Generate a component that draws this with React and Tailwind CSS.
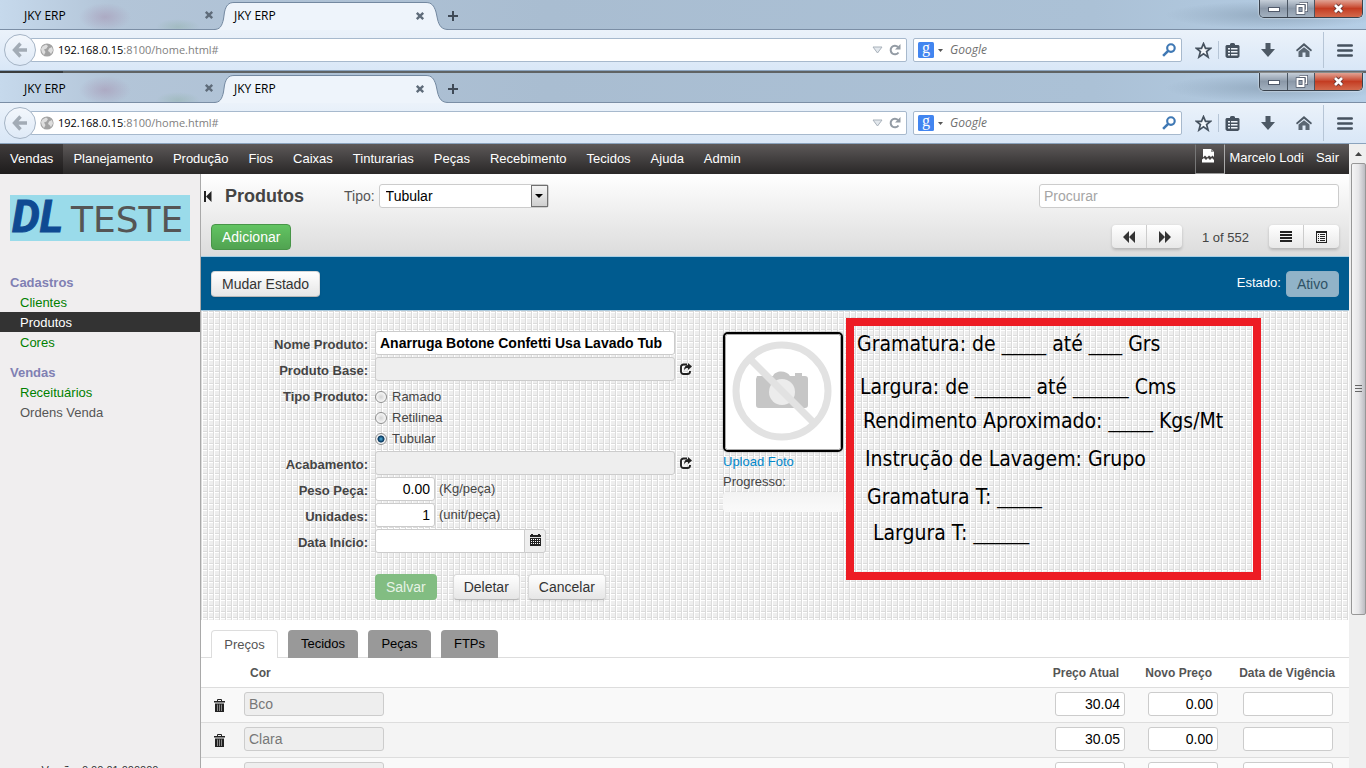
import React from "react";

const CHROME_FONT = "font-['Open_Sans','Noto_Sans',sans-serif]";

function TabClose() {
  return (
    <button type="button" aria-label="Fechar aba" className="flex">
      <svg width="10" height="10" viewBox="0 0 10 10" fill="none" stroke="#5f6c7a" strokeWidth="2.4">
        <path d="M1.8 1.8 8.2 8.2M8.2 1.8 1.8 8.2" />
      </svg>
    </button>
  );
}

function WindowControls() {
  return (
    <div className="flex h-[18px] overflow-hidden rounded-b-[5px] border border-t-0 border-[#39424d] shadow-[0_0_2px_#ffffff]">
      <button type="button" aria-label="Minimizar" className="flex w-7 items-center justify-center border-r border-[#4a5562] bg-linear-to-b from-[#c6cfd9] via-[#8b98a8] via-50% to-[#a3b1c0]">
        <svg width="12" height="6" viewBox="0 0 12 6"><rect x="0.5" y="1.5" width="11" height="4" fill="#fff" stroke="#50596a" /></svg>
      </button>
      <button type="button" aria-label="Restaurar" className="flex w-[27px] items-center justify-center border-r border-[#4a5562] bg-linear-to-b from-[#c6cfd9] via-[#8b98a8] via-50% to-[#a3b1c0]">
        <svg width="13" height="13" viewBox="0 0 13 13" fill="none">
          <path d="M4.5 1.5h7v7h-3" stroke="#50596a" strokeWidth="3" />
          <path d="M4.5 1.5h7v7h-3" stroke="#fff" strokeWidth="1.5" />
          <rect x="2.5" y="4" width="6" height="7" stroke="#50596a" strokeWidth="3.5" />
          <rect x="2.5" y="4" width="6" height="7" stroke="#fff" strokeWidth="2" />
        </svg>
      </button>
      <button type="button" aria-label="Fechar" className="flex w-[47px] items-center justify-center bg-linear-to-b from-[#e0a294] via-[#c43c22] via-50% to-[#d3694c]">
        <svg width="13" height="11" viewBox="0 0 13 11" fill="none">
          <path d="M3 2 10 9M10 2 3 9" stroke="#5a2c2c" strokeWidth="4.4" />
          <path d="M3 2 10 9M10 2 3 9" stroke="#fff" strokeWidth="2.8" />
        </svg>
      </button>
    </div>
  );
}

function TabStrip() {
  return (
    <div className="flex h-[30px] items-stretch bg-[radial-gradient(ellipse_26px_14px_at_105px_17px,#a58fae80,transparent),radial-gradient(ellipse_22px_8px_at_178px_27px,#93b3ac80,transparent),radial-gradient(ellipse_110px_14px_at_1275px_15px,#8298ada0,transparent),linear-gradient(to_right,#c6d9ec,#b3c5d8_8%,#a9bdd1_40%,#abc1d6_80%,#b5cee6)]">
      <div className="flex w-[214px] items-center justify-between border-b border-[#7b8ea5] pl-6 text-[12px] text-black">
        <span className="pt-0.5">JKY ERP</span>
        <TabClose />
      </div>
      <svg width="20" height="30" viewBox="0 0 20 30" className="block shrink-0">
        <path d="M0 30V29.5C6 29.5 8 26 9.5 19L10.5 12C12 5.500 14.500 2.500 20 2.500V30Z" fill="#eef4fb" />
        <path d="M0 29.5C6 29.500 8 26 9.500 19L10.500 12C12 5.500 14.500 2.500 20 2.500" fill="none" stroke="#7388a0" />
      </svg>
      <div className="mt-0.5 flex w-[192px] items-center justify-between border-t border-[#7388a0] bg-[#eef4fb] pr-px pb-0.5 text-[12px] text-black">
        <span>JKY ERP</span>
        <TabClose />
      </div>
      <svg width="22" height="30" viewBox="0 0 22 30" className="block shrink-0">
        <path d="M22 30V29.500C16 29.500 13 26 11.500 19L10 12C8 5.500 5.500 2.500 0 2.500V30Z" fill="#eef4fb" />
        <path d="M22 29.500C16 29.500 13 26 11.500 19L10 12C8 5.500 5.500 2.500 0 2.500" fill="none" stroke="#7388a0" />
      </svg>
      <div className="flex flex-1 items-start justify-between border-b border-[#7b8ea5] pr-[3px]">
        <button type="button" aria-label="Nova aba" className="flex h-8 items-center">
          <svg width="10" height="10" viewBox="0 0 10 10" stroke="#3f4a57" strokeWidth="2"><path d="M5 0V10M0 5H10" /></svg>
        </button>
        <WindowControls />
      </div>
    </div>
  );
}

function Toolbar() {
  return (
    <div className="flex h-[41px] items-center border-b border-[#8ba3bd] bg-linear-to-b from-[#ebf2fa] to-[#d9e7f7] pl-1">
      <button type="button" aria-label="Voltar" className="z-10 flex size-8 shrink-0 items-center justify-center rounded-full border border-[#a5b4c5] bg-linear-to-b from-[#f3f7fc] to-[#dfeaf7]">
        <svg width="16" height="16" viewBox="0 0 16 16" fill="none" stroke="#a2abb5" strokeWidth="3.400"><path d="M8.500 1.500 2.500 8 8.500 14.500M2.500 8H15" /></svg>
      </button>
      <div className="-ml-1.5 flex h-6 flex-1 items-center rounded-[2px] border border-[#a7b9cd] bg-white pr-[5px] pl-[9px]">
        <svg width="14" height="14" viewBox="0 0 14 14" className="shrink-0">
          <circle cx="7" cy="7" r="6.600" fill="#a2a2a2" />
          <path d="M2.500 3.500 6 1.500 8 3 6.500 5.500 4 6.500 5.500 9 4 12 2 9.500 1 6Z M9 5.500 12 4 13 7.500 11 11 9.500 9 8 8Z" fill="#dedede" />
        </svg>
        <span className="ml-1 flex-1 pt-px text-[11px] text-[#808080]"><span className="text-black">192.168.0.15</span>:8100/home.html#</span>
        <svg width="11" height="8" viewBox="0 0 11 8" className="mr-1.5"><path d="M1 1H10L5.500 7Z" fill="#e3e8ed" stroke="#a9b2bb" /></svg>
        <svg width="12" height="12" viewBox="0 0 12 12" fill="none"><path d="M9.500 8.500A4.300 4.300 0 1 1 9 3" stroke="#939ba4" strokeWidth="2" /><path d="M11.500 0V5.500H6Z" fill="#939ba4" /></svg>
      </div>
      <label className="ml-1.5 flex h-6 w-[269px] items-center rounded-[2px] border border-[#a7b9cd] bg-white px-1">
        <svg width="16" height="16" viewBox="0 0 16 16" className="shrink-0">
          <rect width="16" height="16" rx="1.500" fill="#4285f0" />
          <text x="8" y="11" textAnchor="middle" fill="#fff" fontSize="16" fontFamily="Liberation Serif, serif">g</text>
        </svg>
        <svg width="5" height="3" viewBox="0 0 5 3" className="mx-1 shrink-0"><path d="M0 0H5L2.500 3Z" fill="#555" /></svg>
        <input type="text" placeholder="Google" className="ml-[3px] min-w-0 flex-1 text-[12px] italic outline-none placeholder:text-[#707070]" />
        <svg width="14" height="14" viewBox="0 0 13 13" fill="none" stroke="#3f78b4" strokeWidth="2" className="mr-px"><circle cx="8.300" cy="4.700" r="3.500" /><path d="M5.700 7.300 1 12" strokeWidth="2.400" /></svg>
      </label>
      <button type="button" aria-label="Favoritos" className="ml-[13px]">
        <svg width="17" height="17" viewBox="0 0 16 16" fill="#f3f7fb" stroke="#46525f" strokeWidth="1.600"><path d="M8 1.500 9.900 6H14.600L10.900 9 12.300 14.200 8 11.200 3.700 14.200 5.100 9 1.400 6H6.100Z" /></svg>
      </button>
      <span className="ml-1.5 h-[18px] w-px bg-[#b6c5d6]" />
      <button type="button" aria-label="Biblioteca" className="ml-1.5">
        <svg width="15" height="15" viewBox="0 0 15 15"><path d="M5 2V.8L6.500 0H8.500L10 .8V2H13.500L14.500 3V13.500L13 15H2L.5 13.500V3L1.500 2Z" fill="#46525f" /><path d="M3 5H5V6.500H3ZM6 5H12.500V6.500H6ZM3 8H5V9.500H3ZM6 8H12.500V9.500H6ZM3 11H5V12.500H3ZM6 11H12.500V12.500H6Z" fill="#eef4fb" /></svg>
      </button>
      <button type="button" aria-label="Downloads" className="ml-[21px]">
        <svg width="14" height="14" viewBox="0 0 14 14"><path d="M4.500 0H9.500V6H14L7 14 0 6H4.500Z" fill="#4d5965" /></svg>
      </button>
      <button type="button" aria-label="Início" className="ml-[21px]">
        <svg width="16" height="14" viewBox="0 0 16 14"><path d="M0 7 8 0 16 7 15 8.500 8 2.800 1 8.500Z" fill="#4d5965" /><path d="M2.500 8.500 8 4.200 13.500 8.500V14H9.500V9.500H6.500V14H2.500Z" fill="#5b6773" /></svg>
      </button>
      <span className="ml-[11px] h-9 w-px bg-[#b6c5d6]" />
      <button type="button" aria-label="Menu" className="mr-[13px] ml-[13px]">
        <svg width="16" height="13" viewBox="0 0 16 13" stroke="#46525f" strokeWidth="2.600" strokeLinecap="round"><path d="M1.300 1.500H14.700M1.300 6.500H14.700M1.300 11.500H14.700" /></svg>
      </button>
    </div>
  );
}

function BrowserChrome() {
  return (
    <header className={`shrink-0 ${CHROME_FONT}`}>
      <TabStrip />
      <Toolbar />
    </header>
  );
}

const MENUS = ["Vendas", "Planejamento", "Produção", "Fios", "Caixas", "Tinturarias", "Peças", "Recebimento", "Tecidos", "Ajuda", "Admin"];

function NavBar() {
  return (
    <nav className="flex h-[30px] shrink-0 items-stretch bg-linear-to-b from-[#5d5959] to-[#2a2828] text-[13px] leading-[29px] text-white">
      {MENUS.map((m, i) => (
        <a key={m} href="#" className={i === 0 ? "bg-linear-to-b from-[#403c3c] to-[#1e1c1c] px-2.5" : "px-2.5"}>{m}</a>
      ))}
      <div className="ml-auto flex w-[30px] justify-center border border-r-[#aaa] border-l-[#777] border-t-[#555] border-b-[#999] pt-1 pr-1">
        <svg width="13" height="14" viewBox="0 0 13 14" fill="#fff"><path d="M1 0H9L12 3V8L10.500 6.500 9 8 7 6.500 5 8.500 3 6.500 1 8.500Z" /><path d="M0 10.500 2 9 4 11 6 9 8 11 10 9 12 11V13.500H0Z" /><path d="M9 0V3H12Z" fill="#999" /></svg>
      </div>
      <a href="#" className="pr-3 pl-1 leading-[27px]">Marcelo Lodi</a>
      <a href="#" className="pr-2.5 leading-[27px]">Sair</a>
    </nav>
  );
}

const SIDE_LINK = "pt-0.5 pl-5";

function Sidebar() {
  return (
    <aside className="flex w-[201px] shrink-0 flex-col border-r border-[#a9a9a9] bg-[#f0eeef] text-[13px] leading-[18px]">
      <div className="mt-[21px] mb-[31px] ml-2.5 h-[46px] w-[180px]">
        <svg width="180" height="46" viewBox="0 0 180 46" role="img" aria-label="DL TESTE">
          <rect width="180" height="46" fill="#9adbea" />
          <text x="2" y="37" fill="#0f4a92" stroke="#0f4a92" strokeWidth="1" fontSize="44" fontWeight="bold" fontStyle="italic" fontFamily="Roboto, sans-serif">DL</text>
          <text x="61" y="37" fill="#555" fontSize="36" fontFamily="DejaVu Sans, sans-serif">TESTE</text>
        </svg>
      </div>
      <h2 className="pt-0.5 pl-2.5 font-bold text-[#8080b3]">Cadastros</h2>
      <a href="#" className={`${SIDE_LINK} text-[#008000]`}>Clientes</a>
      <a href="#" className={`${SIDE_LINK} bg-[#333] text-white`}>Produtos</a>
      <a href="#" className={`${SIDE_LINK} text-[#008000]`}>Cores</a>
      <h2 className="mt-2.5 pt-0.5 pl-2.5 font-bold text-[#8080b3]">Vendas</h2>
      <a href="#" className={`${SIDE_LINK} text-[#008000]`}>Receituários</a>
      <a href="#" className={`${SIDE_LINK} text-[#555]`}>Ordens Venda</a>
      <p className="mt-auto -mb-2.5 text-center text-[11px] leading-4 text-[#333]">Versão: 0.00.01.000000</p>
    </aside>
  );
}

const BTN = "h-[26px] rounded-[4px] border border-[#d8d8d8] border-b-[#b8b8b8] bg-linear-to-b from-white to-[#e6e6e6] px-2.5 text-[14px] leading-6 text-[#333] shadow-[0_1px_2px_#0000001a]";
const FIELD = "h-6 rounded-[3px] border border-[#ccc] text-[14px] outline-none";
const ICON_BTN = "flex w-[35px] items-center justify-center";

function PageHeader() {
  return (
    <section className="flex flex-col gap-4 border-b border-[#a9cfe4] bg-linear-to-b from-white to-[#dcdcdc] pt-2.5 pr-2.5 pb-1.5 pl-[3px]">
      <div className="flex h-6 items-center">
        <button type="button" aria-label="Recolher">
          <svg width="8" height="11" viewBox="0 0 8 11" fill="#222"><path d="M0 0H2V11H0ZM7.500 0V11L2 5.500Z" /></svg>
        </button>
        <h1 className="ml-[13px] w-[119px] pt-px text-[18px] font-bold text-[#444]">Produtos</h1>
        <label htmlFor="tipo" className="mr-1 text-[14px] text-[#555]">Tipo:</label>
        <div className="relative">
          <select id="tipo" className={`${FIELD} block w-[170px] appearance-none bg-white pl-1.5 text-black`}>
            <option>Tubular</option>
          </select>
          <span className="pointer-events-none absolute top-px right-px flex h-[22px] w-[17px] items-center justify-center border border-[#707070] bg-linear-to-b from-[#f4f4f4] to-[#cfcfcf]">
            <svg width="8" height="4" viewBox="0 0 8 4"><path d="M0 0H8L4 4Z" /></svg>
          </span>
        </div>
        <input type="text" placeholder="Procurar" aria-label="Procurar" className={`${FIELD} ml-auto w-[300px] bg-white px-1 placeholder:text-[#a5a5a5]`} />
      </div>
      <div className="flex h-[26px] items-center pl-[7px]">
        <button type="button" className="h-[26px] rounded-[4px] border border-[#489548] bg-linear-to-b from-[#62c462] to-[#51a351] px-2.5 text-[14px] leading-6 text-white">Adicionar</button>
        <div className="ml-auto flex h-6 divide-x divide-[#ccc] rounded-[4px] border-b border-[#bbb] bg-linear-to-b from-white to-[#e8e8e8] shadow-[0_1px_3px_#00000030]">
          <button type="button" aria-label="Anterior" className={ICON_BTN}><svg width="12" height="12" viewBox="0 0 12 12" fill="#333"><path d="M6 0V12L0 6ZM12 0V12L6 6Z" /></svg></button>
          <button type="button" aria-label="Próximo" className={ICON_BTN}><svg width="12" height="12" viewBox="0 0 12 12" fill="#333"><path d="M0 0V12L6 6ZM6 0V12L12 6Z" /></svg></button>
        </div>
        <span className="mx-5 pt-0.5 text-[13px] text-[#444]">1 of 552</span>
        <div className="flex h-6 divide-x divide-[#ccc] rounded-[4px] border-b border-[#bbb] bg-linear-to-b from-white to-[#e8e8e8] shadow-[0_1px_3px_#00000030]">
          <button type="button" aria-label="Lista" className={ICON_BTN}><svg width="12" height="11" viewBox="0 0 12 11" fill="#222"><path d="M0 0H12V2H0ZM0 3H12V5H0ZM0 6H12V8H0ZM0 9H12V11H0Z" /></svg></button>
          <button type="button" aria-label="Formulário" className={ICON_BTN}><svg width="11" height="12" viewBox="0 0 11 12" fill="#222"><path fillRule="evenodd" d="M0 0H11V12H0ZM1 2V11H10V2Z" /><path d="M2 3H3V4H2ZM4 3H9V4H4ZM2 5H3V6H2ZM4 5H9V6H4ZM2 7H3V8H2ZM4 7H9V8H4ZM2 9H3V10H2ZM4 9H9V10H4Z" /></svg></button>
        </div>
      </div>
    </section>
  );
}

function StateBar() {
  return (
    <section className="flex h-[53px] shrink-0 items-center justify-between bg-[#005b8f] px-2.5">
      <button type="button" className={BTN}>Mudar Estado</button>
      <div className="flex items-center gap-[5px]">
        <span className="pb-0.5 text-[13px] text-white">Estado:</span>
        <button type="button" disabled className="h-[26px] rounded-[4px] border border-[#8db0c6] bg-[#91b3c8] px-2.5 text-[14px] leading-6 text-[#2f5266]">Ativo</button>
      </div>
    </section>
  );
}

function ShareIcon() {
  return (
    <svg width="12" height="12" viewBox="0 0 12 12" className="ml-[5px]"><path d="M7 1.500H3.500A2.500 2.500 0 0 0 1 4V8.500A2.500 2.500 0 0 0 3.500 11H7.500A2.500 2.500 0 0 0 10 8.500V8" fill="none" stroke="#222" strokeWidth="1.900" /><path d="M8 0 12 3.500 8 7V5C6 5 5 5.500 4 7.500 4 4 5.500 2.200 8 2Z" fill="#222" /></svg>
  );
}

function Row({ label, id, children }) {
  return (
    <div className="flex items-center">
      <label htmlFor={id} className="mr-[7px] w-[167px] pt-1 text-right leading-5 font-bold">{label}</label>
      {children}
    </div>
  );
}

function Radio({ label, checked }) {
  return (
    <label className="flex h-[21px] items-center gap-[5px]">
      <input type="radio" name="tipo-produto" defaultChecked={checked} className="size-3 appearance-none rounded-full border border-[#8e8f8f] bg-[radial-gradient(circle,#d4d4d4,#f8f8f8_70%)] checked:bg-[radial-gradient(circle,#4fb4e0_0,#0f3f66_38%,#0f3f66_45%,#f4f4f4_55%)]" />
      {label}
    </label>
  );
}

function Blank({ n }) {
  return <span className="font-['Liberation_Sans',sans-serif] text-[20px]">{"_".repeat(n)}</span>;
}

function Notes() {
  return (
    <div className="mt-[7px] ml-[3px] flex h-[262px] w-[415px] flex-col border-8 border-[#ed1c24] font-['DejaVu_Sans_Condensed','DejaVu_Sans',sans-serif] text-[21px] leading-6 whitespace-nowrap text-black">
      <p className="mt-1.5 ml-[3px]">Gramatura: de <Blank n={4} /> até <Blank n={3} /> Grs</p>
      <p className="mt-[19px] ml-1.5">Largura: de <Blank n={5} /> até <Blank n={5} /> Cms</p>
      <p className="mt-2.5 ml-[9px]">Rendimento Aproximado: <Blank n={4} /> Kgs/Mt</p>
      <p className="mt-3.5 ml-[11px]">Instrução de Lavagem: Grupo</p>
      <p className="mt-3.5 ml-[13px]">Gramatura T: <Blank n={4} /></p>
      <p className="mt-3 ml-[19px]">Largura T: <Blank n={5} /></p>
    </div>
  );
}

function ProductForm() {
  return (
    <form className="flex min-h-[310px] shrink-0 items-start border-t border-[#a9c8dc] bg-[#eee] bg-[linear-gradient(to_right,#dcdcdc_1px,#fff_1px,#fff_2px,transparent_2px),linear-gradient(to_bottom,#dcdcdc_1px,#fff_1px,#fff_2px,transparent_2px)] bg-size-[6px_6px] text-[13px] text-[#444]">
      <div className="flex w-[522px] flex-col gap-0.5 pt-5">
        <Row label="Nome Produto:" id="nome">
          <input id="nome" defaultValue="Anarruga Botone Confetti Usa Lavado Tubular" className={`${FIELD} w-[300px] bg-white pr-3 pl-1 font-bold text-black`} />
        </Row>
        <Row label="Produto Base:" id="base">
          <input id="base" readOnly className={`${FIELD} w-[300px] bg-[#eee] px-1`} />
          <ShareIcon />
        </Row>
        <fieldset className="flex pt-[3px]">
          <span className="mr-[7px] w-[167px] text-right leading-[21px] font-bold">Tipo Produto:</span>
          <div>
            <Radio label="Ramado" />
            <Radio label="Retilinea" />
            <Radio label="Tubular" checked />
          </div>
        </fieldset>
        <Row label="Acabamento:" id="acab">
          <input id="acab" readOnly className={`${FIELD} w-[300px] bg-[#eee] px-1`} />
          <ShareIcon />
        </Row>
        <Row label="Peso Peça:" id="peso">
          <input id="peso" defaultValue="0.00" className={`${FIELD} mr-1 w-[60px] bg-white px-1 text-right text-black`} />(Kg/peça)
        </Row>
        <Row label="Unidades:" id="unid">
          <input id="unid" defaultValue="1" className={`${FIELD} mr-1 w-[60px] bg-white px-1 text-right text-black`} />(unit/peça)
        </Row>
        <Row label="Data Início:" id="data">
          <input id="data" className={`${FIELD} w-[150px] rounded-r-none bg-white px-1`} />
          <button type="button" aria-label="Calendário" className="-ml-px flex h-6 w-[22px] items-center justify-center rounded-r-[3px] border border-[#ccc] bg-[#eee] pb-0.5">
            <svg width="11" height="12" viewBox="0 0 11 12"><path d="M0 1H1V0H3V1H8V0H10V1H11V12H0Z" fill="#222" /><path d="M1 5.500H10M1 7.500H10M1 9.500H10" stroke="#fff" strokeDasharray="1 1" /><path d="M0 3.500H11" stroke="#ddd" /></svg>
          </button>
        </Row>
        <div className="mt-[19px] flex pl-[174px]">
          <button type="button" disabled className="mr-4 h-[26px] rounded-[4px] bg-[#82bd82] px-[11px] text-[14px] text-[#e6f3e6]">Salvar</button>
          <button type="button" className={`${BTN} mr-2`}>Deletar</button>
          <button type="button" className={BTN}>Cancelar</button>
        </div>
      </div>
      <div className="flex w-[120px] flex-col pt-[21px] leading-5">
        <div className="h-[120px] rounded-[5px] border-2 border-black bg-white shadow-[0_0_2px_#888]">
          <svg width="116" height="116" viewBox="0 0 116 116">
            <path d="M32 42H48C50 36 62 36 65 42H70V39H77V42H80A3 3 0 0 1 83 45V71A3 3 0 0 1 80 74H34A3 3 0 0 1 31 71V45Z" fill="#c6c6c6" />
            <circle cx="57" cy="58" r="13" fill="#ececec" />
            <path d="M24 24 91 91" stroke="#e2e2e2" strokeWidth="7" />
            <circle cx="57" cy="57" r="46" fill="none" stroke="#e2e2e2" strokeWidth="7" />
            <rect x=".5" y=".5" width="115" height="115" fill="none" stroke="#aaa" rx="2" />
          </svg>
        </div>
        <a href="#" className="text-[#0088cc]">Upload Foto</a>
        <span>Progresso:</span>
        <div role="progressbar" aria-label="Progresso" className="h-5 rounded-[4px] bg-linear-to-b from-[#f3f3f3] to-[#fafafa]" />
      </div>
      <Notes />
    </form>
  );
}

function Trash() {
  return (
    <button type="button" aria-label="Excluir" className="mt-[7px] block">
      <svg width="11" height="13" viewBox="0 0 11 13"><path d="M3.500 2V.5H7.500V2" fill="none" stroke="#222" /><path d="M0 2H11V3.500H0Z" fill="#222" /><path d="M1 4.500H10V13H1Z" fill="#222" /><path d="M3.500 5.500V12M5.500 5.500V12M7.500 5.500V12" stroke="#8a8a8a" /></svg>
    </button>
  );
}

const PRICES = [
  { cor: "Bco", atual: "30.04", novo: "0.00" },
  { cor: "Clara", atual: "30.05", novo: "0.00" },
  { cor: "", atual: "", novo: "" },
];

const TH = "border-b border-[#ddd] pr-3.5 text-right whitespace-nowrap";
const TD = "border-b border-[#ddd] pt-1 align-top";

function Prices() {
  return (
    <section className="bg-white">
      <div role="tablist" className="flex gap-2.5 border-b border-[#ddd] px-2.5 pt-2.5 text-[13px] text-black">
        <button type="button" role="tab" aria-selected="true" className="-mb-px h-7 w-[67px] rounded-t-[4px] border border-b-0 border-[#ddd] bg-white text-[#555]">Preços</button>
        <button type="button" role="tab" className="-mb-px h-7 w-[70px] rounded-t-[4px] bg-[#999]">Tecidos</button>
        <button type="button" role="tab" className="-mb-px h-7 w-[63px] rounded-t-[4px] bg-[#999]">Peças</button>
        <button type="button" role="tab" className="-mb-px h-7 w-[57px] rounded-t-[4px] bg-[#999]">FTPs</button>
      </div>
      <table className="w-full table-fixed border-separate border-spacing-0 text-[14px]">
        <thead>
          <tr className="h-[30px] text-[12px] text-[#555]">
            <th className="w-[43px] border-b border-[#ddd]" aria-label="Excluir"></th>
            <th className="border-b border-[#ddd] pl-1.5 text-left">Cor</th>
            <th className={`w-[93px] ${TH}`}>Preço Atual</th>
            <th className={`w-[93px] ${TH}`}>Novo Preço</th>
            <th className={`w-[123px] ${TH}`}>Data de Vigência</th>
          </tr>
        </thead>
        <tbody>
          {PRICES.map((p, i) => (
            <tr key={i} className="h-[35px] bg-[#f9f9f9] even:bg-[#f4f4f4]">
              <td className={`${TD} pl-[13px]`}><Trash /></td>
              <td className={TD}><input aria-label="Cor" readOnly value={p.cor} className={`${FIELD} block w-[140px] bg-[#eee] px-1 text-[#777]`} /></td>
              <td className={`${TD} pr-2`}><input aria-label="Preço Atual" defaultValue={p.atual} className={`${FIELD} ml-auto block w-[70px] bg-white px-1 text-right text-black`} /></td>
              <td className={`${TD} pr-2`}><input aria-label="Novo Preço" defaultValue={p.novo} className={`${FIELD} ml-auto block w-[70px] bg-white px-1 text-right text-black`} /></td>
              <td className={`${TD} pr-4`}><input aria-label="Data de Vigência" className={`${FIELD} ml-auto block w-[90px] bg-white px-1`} /></td>
            </tr>
          ))}
        </tbody>
      </table>
    </section>
  );
}

function ScrollBar() {
  return (
    <div className="flex w-[17px] shrink-0 flex-col items-center bg-[#efefef] pl-px">
      <span className="flex h-[19px] items-center"><svg width="7" height="4" viewBox="0 0 7 4"><path d="M3.500 0 7 4H0Z" fill="#444" /></svg></span>
      <div className="flex h-[452px] w-[15px] items-center justify-center rounded-[2px] border border-[#979797] bg-linear-to-r from-[#f5f5f5] via-[#e6e6e8] to-[#bcbcc2]">
        <svg width="7" height="8" viewBox="0 0 7 8" stroke="#666"><path d="M0 .5H7M0 3.500H7M0 6.500H7" /></svg>
      </div>
    </div>
  );
}

export default function App() {
  return (
    <div className="flex h-screen flex-col overflow-hidden bg-white font-['Liberation_Sans',Arial,sans-serif]">
      <BrowserChrome />
      <div className="h-0.5 shrink-0 bg-linear-to-r from-[#3a3d3d] from-[63px] to-[#5f6364] to-[63px]" />
      <BrowserChrome />
      <div className="flex min-h-0 flex-1">
        <div className="flex min-w-0 flex-1 flex-col">
          <NavBar />
          <div className="flex min-h-0 flex-1">
            <Sidebar />
            <main className="flex min-w-0 flex-1 flex-col overflow-hidden">
              <PageHeader />
              <StateBar />
              <ProductForm />
              <Prices />
            </main>
          </div>
        </div>
        <ScrollBar />
      </div>
    </div>
  );
}
